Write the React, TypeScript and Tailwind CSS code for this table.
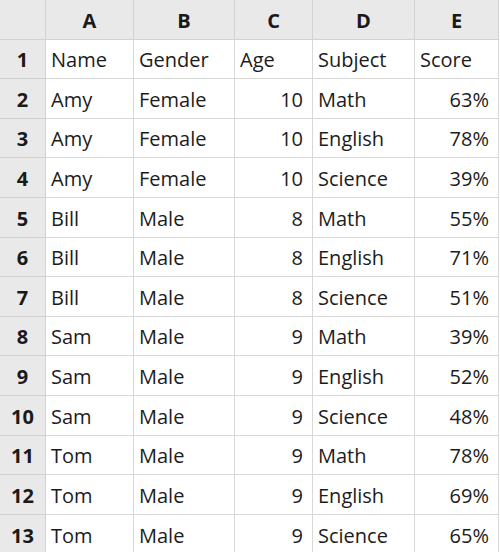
import React from "react";

interface Row {
  name: string;
  gender: string;
  age: string;
  subject: string;
  score: string;
}

const rows: Row[] = [
  { name: "Name", gender: "Gender", age: "Age", subject: "Subject", score: "Score" },
  { name: "Amy", gender: "Female", age: "10", subject: "Math", score: "63%" },
  { name: "Amy", gender: "Female", age: "10", subject: "English", score: "78%" },
  { name: "Amy", gender: "Female", age: "10", subject: "Science", score: "39%" },
  { name: "Bill", gender: "Male", age: "8", subject: "Math", score: "55%" },
  { name: "Bill", gender: "Male", age: "8", subject: "English", score: "71%" },
  { name: "Bill", gender: "Male", age: "8", subject: "Science", score: "51%" },
  { name: "Sam", gender: "Male", age: "9", subject: "Math", score: "39%" },
  { name: "Sam", gender: "Male", age: "9", subject: "English", score: "52%" },
  { name: "Sam", gender: "Male", age: "9", subject: "Science", score: "48%" },
  { name: "Tom", gender: "Male", age: "9", subject: "Math", score: "78%" },
  { name: "Tom", gender: "Male", age: "9", subject: "English", score: "69%" },
  { name: "Tom", gender: "Male", age: "9", subject: "Science", score: "65%" },
];

// row heights alternate so the grid lines land on whole pixels (~39.6px pitch)
const tall = [false, true, false, true, true, false, true, false, true, true, false, true, true];

const cols = "grid grid-cols-[46px_88px_101px_78px_102px_84px]";
const head = "flex items-center justify-center bg-[#e9e9e9] border-r border-b border-[#d2d2d2] font-bold text-[#1a1a1a]";
const cell = "flex items-center bg-white border-r border-b border-[#d8d8d8] px-[5px] pt-[2px] text-[#1c1c1c]";

export default function App() {
  return (
    <div className="w-[500px] h-[552px] overflow-hidden bg-white font-['Open_Sans',sans-serif] text-[20px] leading-none">
      {/* column letters */}
      <div className={`${cols} h-[40px]`}>
        <div className={head}></div>
        {["A", "B", "C", "D", "E"].map((l) => (
          <div key={l} className={`${head} pt-[2px]`}>
            {l}
          </div>
        ))}
      </div>

      {rows.map((r, i) => {
        const numeric = i > 0;
        return (
          <div key={i} className={`${cols} ${tall[i] ? "h-[40px]" : "h-[39px]"}`}>
            <div className={`${head} pt-[2px]`}>{i + 1}</div>
            <div className={cell}>{r.name}</div>
            <div className={cell}>{r.gender}</div>
            <div className={`${cell} ${numeric ? "justify-end pr-[9px]" : ""}`}>{r.age}</div>
            <div className={cell}>{r.subject}</div>
            <div className={`${cell} ${numeric ? "justify-end pr-[9px]" : ""}`}>{r.score}</div>
          </div>
        );
      })}
    </div>
  );
}
